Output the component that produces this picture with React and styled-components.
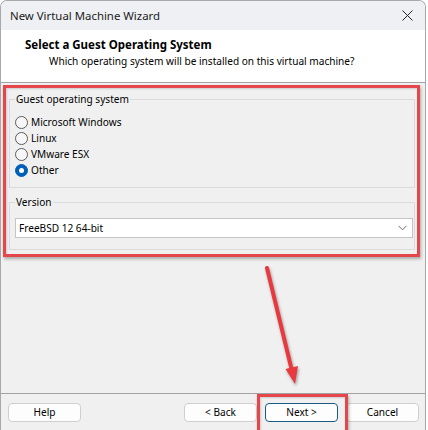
import React from "react";
import styled, { createGlobalStyle } from "styled-components";

const GlobalStyle = createGlobalStyle`
  html, body {
    margin: 0;
    padding: 0;
    background: #ffffff;
  }
  body {
    font-family: "Noto Sans", "Segoe UI", Roboto, sans-serif;
    font-size: 10.1px;
    color: #000;
    overflow: hidden;
  }
  * { box-sizing: border-box; }
`;

const Window = styled.div`
  position: relative;
  width: 426px;
  height: 431px;
  display: flex;
  flex-direction: column;
  border: 1px solid #a8a8a8;
  border-bottom: none;
  border-radius: 7px 7px 0 0;
  overflow: hidden;
  background: #f0f0f0;
`;

const TitleBar = styled.div`
  height: 29px;
  flex: none;
  display: flex;
  align-items: center;
  justify-content: space-between;
  padding: 0 8px 0 9px;
  background: #eef0f4;
  color: #1b1b1b;
  font-size: 11.4px;
`;

const CloseButton = styled.button`
  width: 20px;
  height: 20px;
  padding: 0;
  border: none;
  background: transparent;
  display: flex;
  align-items: center;
  justify-content: center;
`;

const Header = styled.div`
  height: 53px;
  flex: none;
  background: #ffffff;
  border-bottom: 1px solid #a3a3a3;
  padding: 7px 0 0 24px;
  display: flex;
  flex-direction: column;
`;

const HeaderTitle = styled.div`
  font-weight: 700;
  font-size: 11.5px;
  line-height: 16px;
`;

const HeaderSubtitle = styled.div`
  line-height: 16px;
  padding-left: 24px;
`;

const Body = styled.div`
  flex: 1;
  display: flex;
  flex-direction: column;
  gap: 6px;
  padding: 8px 10px 0 8px;
`;

const Group = styled.fieldset`
  margin: 0;
  border: 1px solid #dadada;
  padding: ${(p) => p.$pad};
  min-width: 0;
`;

const Legend = styled.legend`
  padding: 0 1px;
  line-height: 16px;
`;

const RadioRow = styled.label`
  height: 16px;
  display: flex;
  align-items: center;
  gap: 3px;
`;

const RadioDot = styled.span`
  width: 13px;
  height: 13px;
  border-radius: 50%;
  flex: none;
  border: 1px solid ${(p) => (p.$on ? "#005fb8" : "#5c5c5c")};
  background: ${(p) => (p.$on ? "#005fb8" : "#f7f7f7")};
  display: flex;
  align-items: center;
  justify-content: center;
  &::after {
    content: "";
    width: 5px;
    height: 5px;
    border-radius: 50%;
    background: #ffffff;
    display: ${(p) => (p.$on ? "block" : "none")};
  }
`;

const Select = styled.div`
  height: 20px;
  background: #ffffff;
  border: 1px solid #c4c4c4;
  display: flex;
  align-items: center;
  justify-content: space-between;
  padding: 0 5px 0 3px;
`;

const Footer = styled.div`
  height: 38px;
  flex: none;
  border-top: 1px solid #a3a3a3;
  display: flex;
  align-items: flex-start;
  padding: 9px 6px 0 7px;
`;

const ButtonGroup = styled.div`
  margin-left: auto;
  display: flex;
  gap: 8px;
`;

const Button = styled.button`
  width: 73px;
  height: 19px;
  padding: 0;
  font: inherit;
  color: #000;
  background: #fdfdfd;
  border: 1px solid ${(p) => (p.$focus ? "#1c5a86" : "#cfcfcf")};
  border-radius: 4px;
  line-height: 17px;
`;

/* red annotation frames and arrow drawn on top of the dialog */
const Frame = styled.div`
  position: absolute;
  left: ${(p) => p.$x}px;
  top: ${(p) => p.$y}px;
  width: ${(p) => p.$w}px;
  height: ${(p) => p.$h}px;
  border: 3px solid #e5464c;
  box-shadow: 1px 2px 3px rgba(0, 0, 0, 0.3), inset 1px 1px 2px rgba(0, 0, 0, 0.15);
  pointer-events: none;
`;

const ArrowLayer = styled.svg`
  position: absolute;
  left: 0;
  top: 0;
  width: 426px;
  height: 430px;
  pointer-events: none;
  filter: drop-shadow(1px 2px 1.5px rgba(0, 0, 0, 0.35));
`;

const options = [
  { label: "Microsoft Windows", on: false },
  { label: "Linux", on: false },
  { label: "VMware ESX", on: false },
  { label: "Other", on: true },
];

export default function App() {
  return (
    <>
      <GlobalStyle />
      <Window>
        <TitleBar>
          <span>New Virtual Machine Wizard</span>
          <CloseButton aria-label="Close">
            <svg width="11" height="11" viewBox="0 0 11 11">
              <path d="M0.5 0.5 L10.5 10.5 M10.5 0.5 L0.5 10.5" stroke="#222" strokeWidth="1" />
            </svg>
          </CloseButton>
        </TitleBar>
        <Header>
          <HeaderTitle>Select a Guest Operating System</HeaderTitle>
          <HeaderSubtitle>Which operating system will be installed on this virtual machine?</HeaderSubtitle>
        </Header>
        <Body>
          <Group $pad="7px 5px 9px 5px">
            <Legend>Guest operating system</Legend>
            {options.map((o) => (
              <RadioRow key={o.label}>
                <RadioDot $on={o.on} />
                {o.label}
              </RadioRow>
            ))}
          </Group>
          <Group $pad="8px 1px 11px 5px">
            <Legend>Version</Legend>
            <Select>
              <span>FreeBSD 12 64-bit</span>
              <svg width="9" height="6" viewBox="0 0 9 6">
                <path d="M0.5 0.8 L4.5 4.8 L8.5 0.8" fill="none" stroke="#707070" strokeWidth="1" />
              </svg>
            </Select>
          </Group>
        </Body>
        <Footer>
          <Button>Help</Button>
          <ButtonGroup>
            <Button>&lt; Back</Button>
            <Button $focus>Next &gt;</Button>
            <Button>Cancel</Button>
          </ButtonGroup>
        </Footer>

        <Frame $x={2} $y={84} $w={417} $h={172} />
        <Frame $x={256} $y={393} $w={91} $h={44} />
        <ArrowLayer viewBox="0 0 426 430">
          <line x1="266" y1="267" x2="291" y2="370" stroke="#e8393f" strokeWidth="4" strokeLinecap="round" />
          <polygon points="294,383 284.5,368 297,365" fill="#e8393f" />
        </ArrowLayer>
      </Window>
    </>
  );
}
